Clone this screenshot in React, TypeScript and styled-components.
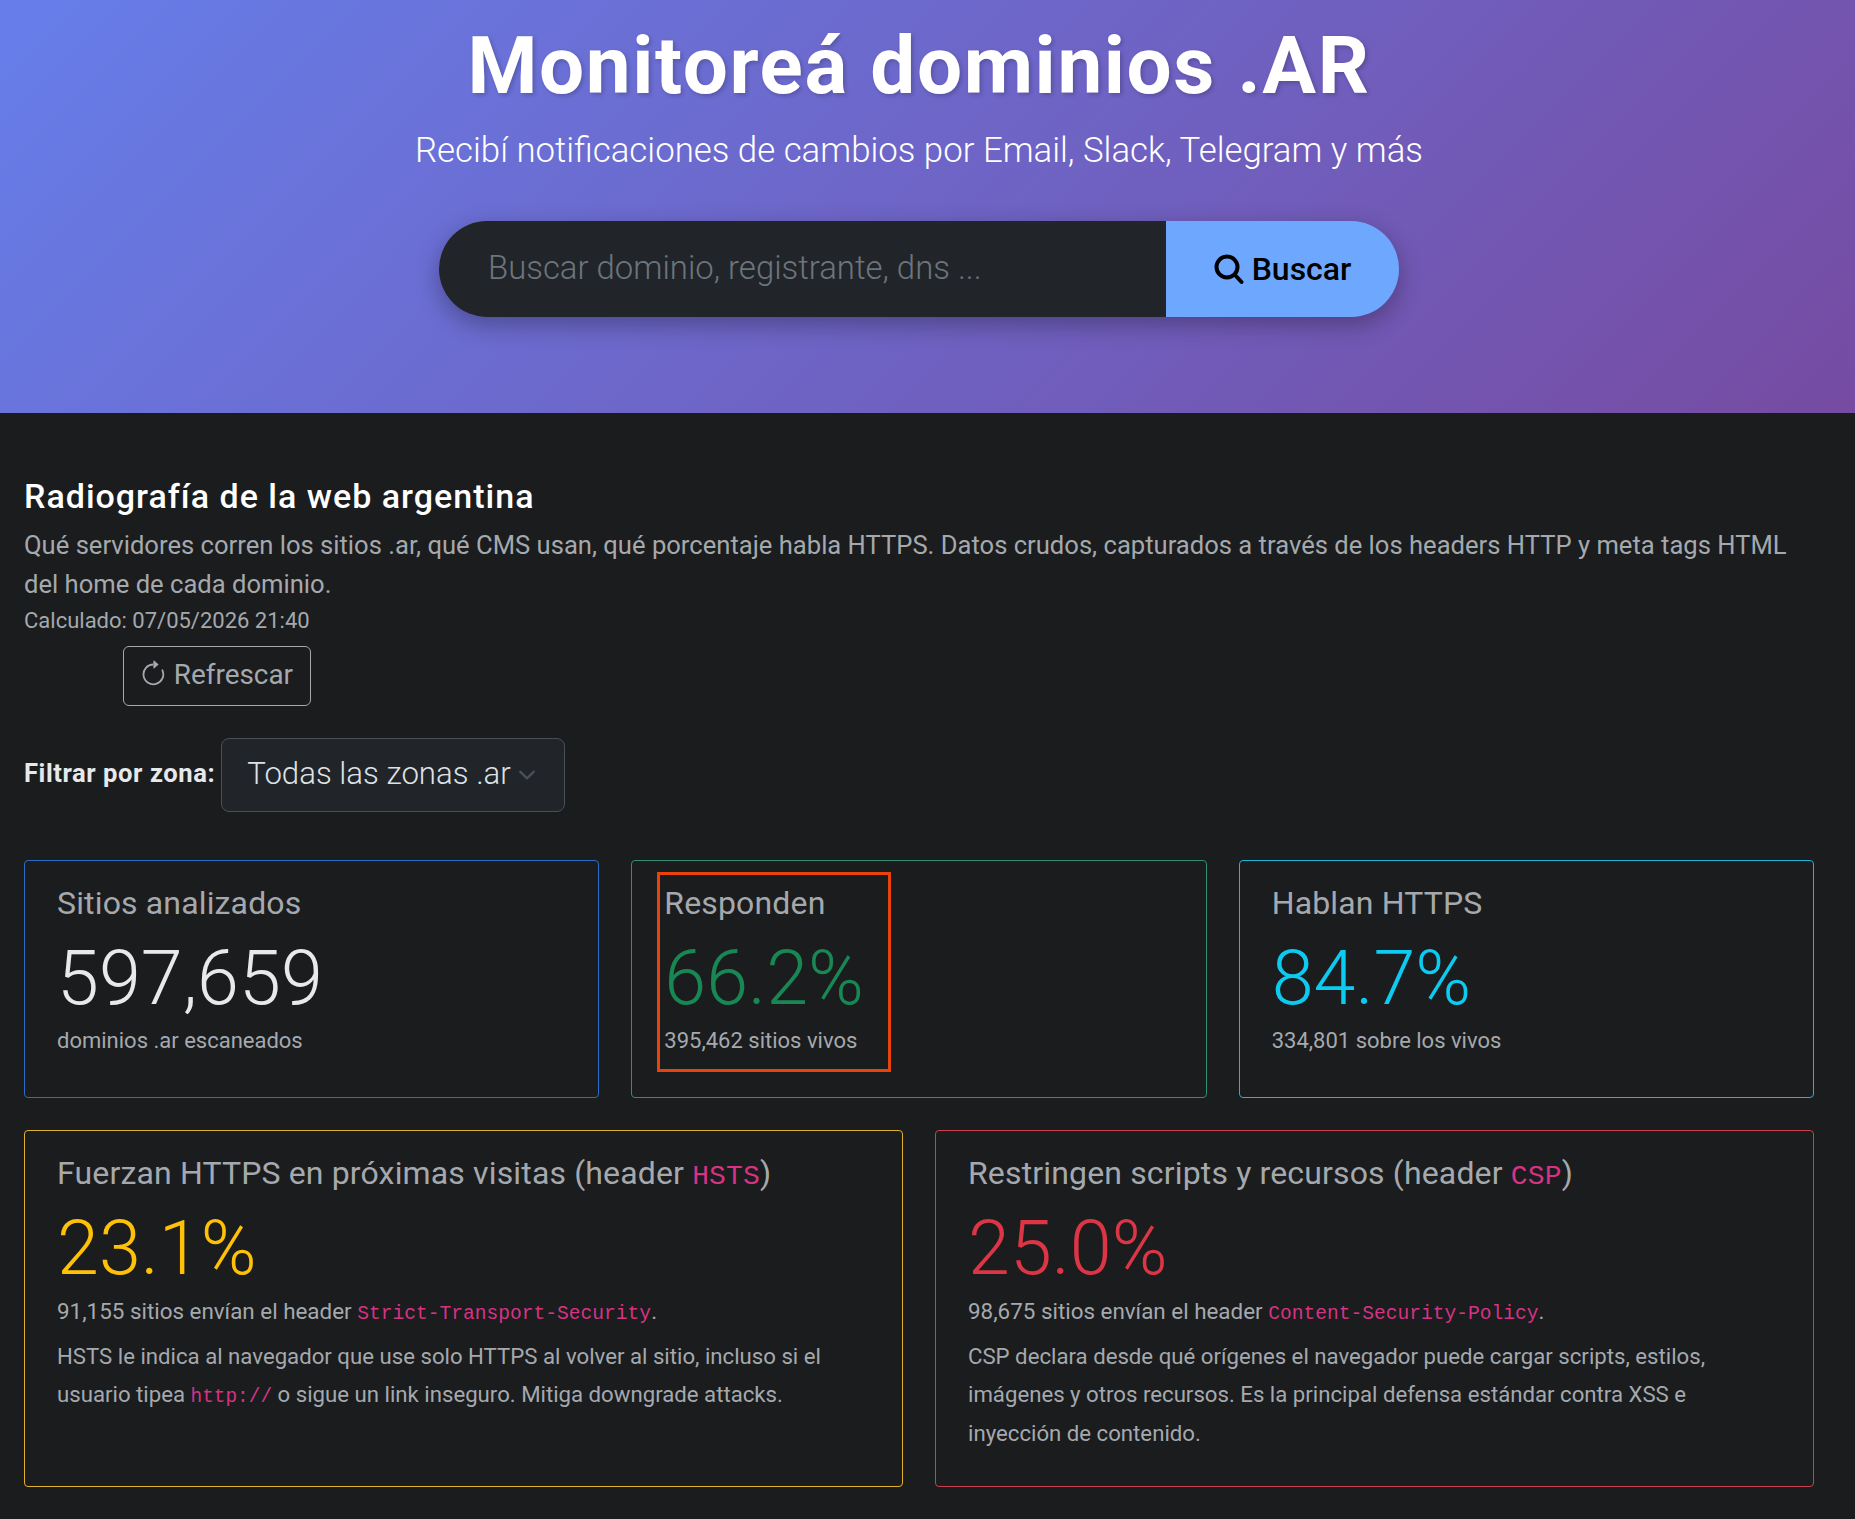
import React from 'react';
import styled, { createGlobalStyle } from 'styled-components';

const GlobalStyle = createGlobalStyle`
  html, body {
    margin: 0;
    padding: 0;
    background: #1a1c1e;
  }
  body {
    font-family: Roboto, "Noto Sans", sans-serif;
    font-size: 25.6px;
    line-height: 1.5;
    color: #dee2e6;
  }
  * {
    box-sizing: border-box;
  }
`;

const Hero = styled.header`
  height: 413px;
  padding: 18px 17px 0 0;
  display: flex;
  flex-direction: column;
  align-items: center;
  background: linear-gradient(135deg, #667eea 0%, #764ba2 100%);
  color: #fff;
`;

const HeroTitle = styled.h1`
  margin: 0;
  font-size: 80px;
  font-weight: 700;
  line-height: 96px;
  letter-spacing: 1.6px;
  text-shadow: 2px 2px 4px rgba(0, 0, 0, 0.2);
`;

const HeroLead = styled.p`
  margin: 12px 0 47px;
  font-size: 34.8px;
  font-weight: 300;
  line-height: 48px;
`;

const SearchForm = styled.form`
  display: flex;
  width: 960px;
  height: 96px;
  border-radius: 48px;
  overflow: hidden;
  box-shadow: 0 8px 24px rgba(0, 0, 0, 0.3);
`;

const SearchPlaceholder = styled.div`
  flex: 1;
  display: flex;
  align-items: center;
  padding: 0 0 2px 49px;
  background: #212529;
  color: #6c757d;
  font-size: 32.9px;
  font-weight: 300;
`;

const SearchButton = styled.button`
  width: 233px;
  display: flex;
  align-items: center;
  justify-content: center;
  gap: 8px;
  border: 0;
  background: #6ea8fe;
  color: #000;
  font-family: inherit;
  font-size: 32px;
  font-weight: 500;
`;

const Main = styled.main`
  padding: 64px 41px 32px 24px;
`;

const SectionTitle = styled.h2`
  margin: 0 0 12px;
  font-size: 34px;
  font-weight: 500;
  line-height: 38.4px;
  letter-spacing: 1px;
  color: #fff;
`;

const Intro = styled.p`
  margin: -1px 0 1px;
  color: #a5a9ad;
`;

const Stamp = styled.div`
  font-size: 22px;
  line-height: 33.6px;
  color: #a5a9ad;
`;

const RefreshButton = styled.button`
  display: flex;
  align-items: center;
  gap: 6px;
  width: 188px;
  height: 60px;
  margin: 8px 0 32px 99px;
  padding: 0 0 2px 15px;
  background: transparent;
  border: 1px solid #a5a9ad;
  border-radius: 6px;
  color: #a5a9ad;
  font-family: inherit;
  font-size: 27.9px;

  svg {
    flex-shrink: 0;
  }
`;

const FilterRow = styled.div`
  display: flex;
  align-items: center;
  gap: 6px;
  margin-bottom: 48px;
`;

const FilterLabel = styled.label`
  margin-bottom: 4px;
  font-weight: 700;
  font-size: 25.6px;
  letter-spacing: 0.56px;
  color: #e6e8ea;
`;

const ZoneSelect = styled.div`
  display: flex;
  align-items: center;
  justify-content: space-between;
  width: 344px;
  height: 74px;
  padding: 0 28px 0 25px;
  background: #212529;
  border: 1px solid #495057;
  border-radius: 8px;
  font-size: 31.2px;
  font-weight: 300;
  color: #dee2e6;
`;

const CardRow = styled.div<{ $cols: number }>`
  display: grid;
  grid-template-columns: repeat(${({ $cols }) => $cols}, 1fr);
  gap: 32px;
  margin-bottom: 32px;
`;

const Card = styled.section<{ $accent: string; $minHeight?: number }>`
  position: relative;
  min-height: ${({ $minHeight }) => $minHeight ?? 238}px;
  padding: 23px 32px 32px;
  border: 1px solid ${({ $accent }) => $accent};
  border-radius: 4px;
`;

const CardTitle = styled.h3`
  margin: 0 0 13.8px;
  font-size: 32px;
  font-weight: 400;
  line-height: 38.4px;
  letter-spacing: 0.15px;
  color: #a5a9ad;
`;

const CardValue = styled.div<{ $color: string; $tight?: boolean }>`
  margin: 4px 0 ${({ $tight }) => ($tight ? 2 : 4)}px;
  font-size: 75.5px;
  font-weight: 300;
  line-height: 84px;
  color: ${({ $color }) => $color};
`;

const CardNote = styled.div`
  font-size: 22px;
  line-height: 33.6px;
  color: #a5a9ad;
`;

const CardSummary = styled.p`
  margin: 0 0 6.4px;
  font-size: 22.4px;
  line-height: 38.4px;
  color: #a5a9ad;
`;

const CardDetail = styled.p`
  margin: 0;
  font-size: 22.2px;
  line-height: 38.4px;
  color: #a5a9ad;
`;

const Code = styled.code`
  font-family: "Liberation Mono", monospace;
  font-size: 0.875em;
  line-height: 1;
  color: #d63384;
`;

const Marker = styled.div`
  position: absolute;
  left: 25px;
  top: 11px;
  width: 234px;
  height: 200px;
  border: 3px solid #e8420f;
`;

const App = () => (
  <>
    <GlobalStyle />
    <Hero>
      <HeroTitle>Monitoreá dominios .AR</HeroTitle>
      <HeroLead>Recibí notificaciones de cambios por Email, Slack, Telegram y más</HeroLead>
      <SearchForm>
        <SearchPlaceholder>Buscar dominio, registrante, dns ...</SearchPlaceholder>
        <SearchButton type="button">
          <svg width="30" height="32" viewBox="0 0 30 32" fill="none" stroke="currentColor" strokeWidth="4" strokeLinecap="round">
            <circle cx="13" cy="14" r="10.5" />
            <path d="m21 22 6.5 7" />
          </svg>
          Buscar
        </SearchButton>
      </SearchForm>
    </Hero>
    <Main>
      <SectionTitle>Radiografía de la web argentina</SectionTitle>
      <Intro>
        Qué servidores corren los sitios .ar, qué CMS usan, qué porcentaje habla HTTPS. Datos crudos, capturados a través de los headers HTTP y meta tags HTML del home de cada dominio.
      </Intro>
      <Stamp>Calculado: 07/05/2026 21:40</Stamp>
      <RefreshButton type="button">
        <svg width="28.8" height="28.8" viewBox="0 0 16 16" fill="currentColor">
          <path fillRule="evenodd" d="M8 3a5 5 0 1 0 4.546 2.914.5.5 0 0 1 .908-.417A6 6 0 1 1 8 2v1z" />
          <path d="M8 4.466V.534a.25.25 0 0 1 .41-.192l2.36 1.966c.12.1.12.284 0 .384L8.41 4.658A.25.25 0 0 1 8 4.466z" />
        </svg>
        Refrescar
      </RefreshButton>
      <FilterRow>
        <FilterLabel>Filtrar por zona:</FilterLabel>
        <ZoneSelect>
          Todas las zonas .ar
          <svg width="18" height="18" viewBox="0 0 16 16" fill="none" stroke="#495057" strokeWidth="2" strokeLinecap="round" strokeLinejoin="round">
            <path d="m2 5 6 6 6-6" />
          </svg>
        </ZoneSelect>
      </FilterRow>
      <CardRow $cols={3}>
        <Card $accent="#2b6cc4">
          <CardTitle>Sitios analizados</CardTitle>
          <CardValue $color="#e9e9e9">597,659</CardValue>
          <CardNote>dominios .ar escaneados</CardNote>
        </Card>
        <Card $accent="#2f8f6f">
          <CardTitle>Responden</CardTitle>
          <CardValue $color="#198754">66.2%</CardValue>
          <CardNote>395,462 sitios vivos</CardNote>
          <Marker />
        </Card>
        <Card $accent="#22b4d6">
          <CardTitle>Hablan HTTPS</CardTitle>
          <CardValue $color="#0dcaf0">84.7%</CardValue>
          <CardNote>334,801 sobre los vivos</CardNote>
        </Card>
      </CardRow>
      <CardRow $cols={2}>
        <Card $accent="#e0b030" $minHeight={357}>
          <CardTitle>Fuerzan HTTPS en próximas visitas (header <Code>HSTS</Code>)</CardTitle>
          <CardValue $color="#ffc107" $tight>23.1%</CardValue>
          <CardSummary>91,155 sitios envían el header <Code>Strict-Transport-Security</Code>.</CardSummary>
          <CardDetail>
            HSTS le indica al navegador que use solo HTTPS al volver al sitio, incluso si el usuario tipea <Code>http://</Code> o sigue un link inseguro. Mitiga downgrade attacks.
          </CardDetail>
        </Card>
        <Card $accent="#c8404f" $minHeight={357}>
          <CardTitle>Restringen scripts y recursos (header <Code>CSP</Code>)</CardTitle>
          <CardValue $color="#dc3545" $tight>25.0%</CardValue>
          <CardSummary>98,675 sitios envían el header <Code>Content-Security-Policy</Code>.</CardSummary>
          <CardDetail>
            CSP declara desde qué orígenes el navegador puede cargar scripts, estilos, imágenes y otros recursos. Es la principal defensa estándar contra XSS e inyección de contenido.
          </CardDetail>
        </Card>
      </CardRow>
    </Main>
  </>
);

export default App;
